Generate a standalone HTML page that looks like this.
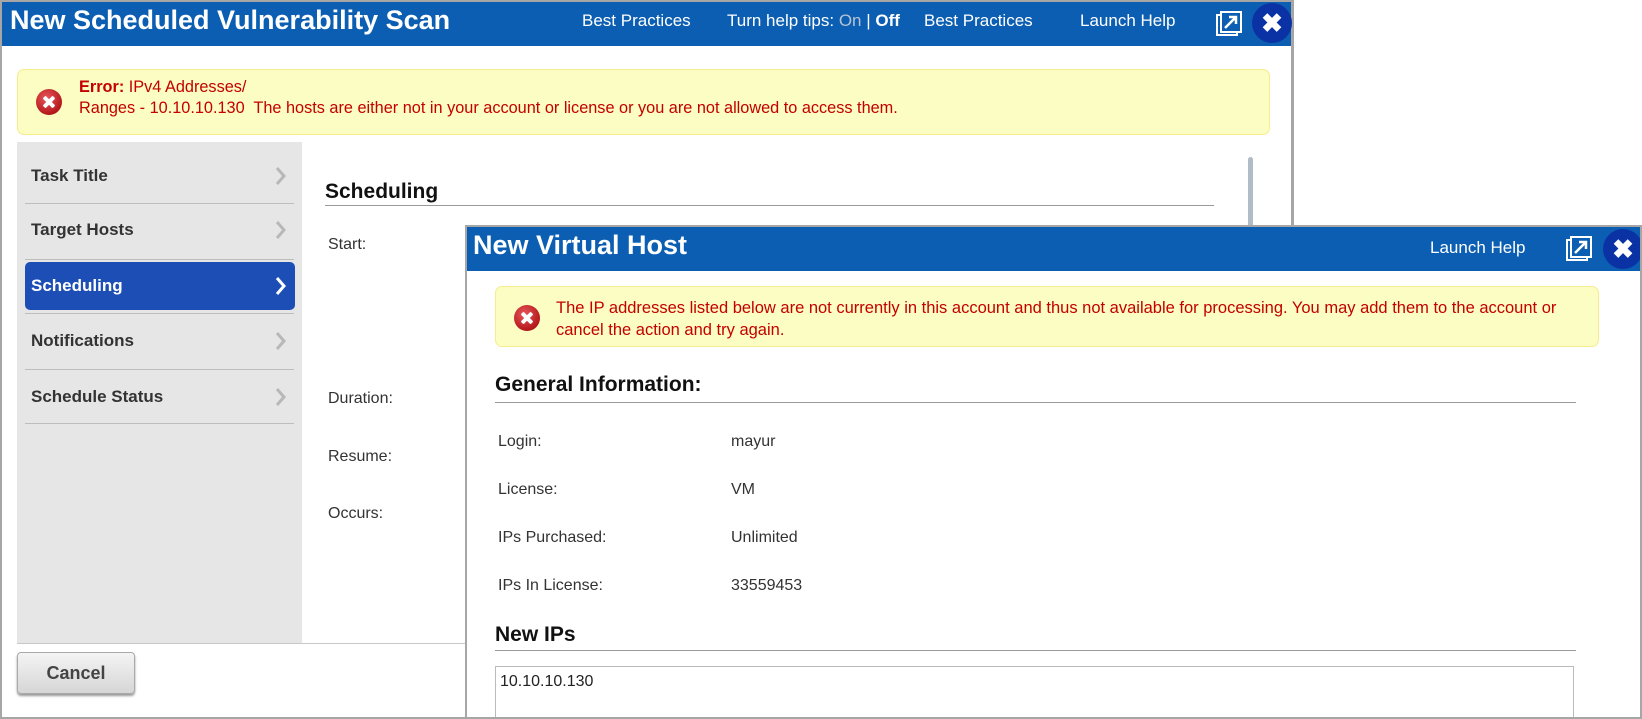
<!DOCTYPE html>
<html><head><meta charset="utf-8"><style>
*{margin:0;padding:0;box-sizing:border-box}
html,body{width:1642px;height:719px;overflow:hidden}
body{background:#fff;font-family:"Liberation Sans",Arial,sans-serif;position:relative}
.a{position:absolute;white-space:nowrap}
.hdr{background:#0b5eb2;color:#fff}
.lnk{font-size:17px;color:#fff}
.err{background:#fbfdc2;border:1px solid #f7ec8f;border-radius:7px}
.ic{width:26px;height:26px;border-radius:50%;background:radial-gradient(circle at 40% 35%,#e8575a,#b4181c 70%,#8e0f12);}
.ic:before,.ic:after{content:"";position:absolute;left:6px;top:11px;width:14px;height:4px;background:#fff;border-radius:1px}
.ic:before{transform:rotate(45deg)}.ic:after{transform:rotate(-45deg)}
.et{font-size:16.3px;color:#c40000}
.nav{font-size:17px;font-weight:bold;color:#333}
.sep{height:1px;background:#bdbdbd;width:269px;left:25px}
.lbl{font-size:16px;color:#333}
.close{width:40px;height:40px;border-radius:50%;background:#0a32a5;color:#fff;font-size:26px;font-weight:bold;text-align:center;line-height:40px}
</style></head><body>
<div class="a" style="left:0;top:0;width:1294px;height:719px;border:2px solid #a6a6a6;border-right-width:3px"></div>
<div class="a hdr" style="left:2px;top:2px;width:1289px;height:44px"></div>
<div class="a" style="left:10px;top:5px;font-size:27px;font-weight:bold;color:#fff">New Scheduled Vulnerability Scan</div>
<div class="a lnk" style="left:582px;top:11px">Best Practices</div>
<div class="a lnk" style="left:727px;top:11px">Turn help tips: <span style="color:#b7c4d4">On</span> | <b>Off</b></div>
<div class="a lnk" style="left:924px;top:11px">Best Practices</div>
<div class="a lnk" style="left:1080px;top:11px">Launch Help</div>
<svg class="a" style="left:1216px;top:11px" width="26" height="26" viewBox="0 0 26 26"><rect x="1" y="4" width="20" height="20" fill="none" stroke="#fff" stroke-width="2"/><rect x="5" y="1" width="20" height="20" fill="#0b5eb2" stroke="#fff" stroke-width="2"/><path d="M9 17 L20 6 M13 6 H20 V13" stroke="#fff" stroke-width="2.5" fill="none"/></svg>
<div class="a close" style="left:1252px;top:3px">✖</div>

<div class="a err" style="left:17px;top:69px;width:1253px;height:66px"></div>
<div class="a ic" style="left:36px;top:89px"></div>
<div class="a et" style="left:79px;top:78px"><b>Error:</b> IPv4 Addresses/</div>
<div class="a et" style="left:79px;top:99px">Ranges - 10.10.10.130&nbsp; The hosts are either not in your account or license or you are not allowed to access them.</div>

<div class="a" style="left:17px;top:142px;width:285px;height:501px;background:#e6e6e6"></div>
<div class="a nav" style="left:31px;top:166px">Task Title</div>
<div class="a sep" style="top:203px"></div>
<div class="a nav" style="left:31px;top:220px">Target Hosts</div>
<div class="a sep" style="top:259px"></div>
<div class="a" style="left:25px;top:262px;width:270px;height:48px;background:#1c4eb6;border-radius:5px"></div>
<div class="a nav" style="left:31px;top:276px;color:#fff">Scheduling</div>
<div class="a sep" style="top:313px"></div>
<div class="a nav" style="left:31px;top:331px">Notifications</div>
<div class="a sep" style="top:369px"></div>
<div class="a nav" style="left:31px;top:387px">Schedule Status</div>
<div class="a sep" style="top:423px"></div>
<svg class="a" style="left:274px;top:165px" width="14" height="260" viewBox="0 0 14 260">
<g fill="none" stroke="#b8b8b8" stroke-width="3"><path d="M3 3 L10 11 L3 19"/><path d="M3 57 L10 65 L3 73"/><path d="M3 168 L10 176 L3 184"/><path d="M3 224 L10 232 L3 240"/></g>
<path d="M3 113 L10 121 L3 129" fill="none" stroke="#fff" stroke-width="3"/></svg>

<div class="a" style="left:325px;top:180px;font-size:21px;font-weight:bold;color:#111">Scheduling</div>
<div class="a" style="left:325px;top:205px;width:889px;height:1px;background:#999"></div>
<div class="a lbl" style="left:328px;top:236px">Start:</div>
<div class="a lbl" style="left:328px;top:390px">Duration:</div>
<div class="a lbl" style="left:328px;top:448px">Resume:</div>
<div class="a lbl" style="left:328px;top:505px">Occurs:</div>
<div class="a" style="left:1248px;top:157px;width:5px;height:72px;background:#b0bcc6;border-radius:3px"></div>

<div class="a" style="left:17px;top:643px;width:1272px;height:1px;background:#c8c8c8"></div>
<div class="a" style="left:17px;top:652px;width:118px;height:42px;border:1px solid #aaa;border-radius:4px;background:linear-gradient(#f4f4f4,#d6d6d6);box-shadow:0 2px 2px #999;font-size:18px;font-weight:bold;color:#444;text-align:center;line-height:40px">Cancel</div>

<div class="a" style="left:465px;top:225px;width:1177px;height:494px;background:#fff;border:2px solid #a6a6a6;border-bottom:none;border-right:none"></div>
<div class="a hdr" style="left:467px;top:227px;width:1175px;height:44px"></div>
<div class="a" style="left:473px;top:230px;font-size:27px;font-weight:bold;color:#fff">New Virtual Host</div>
<div class="a lnk" style="left:1430px;top:238px">Launch Help</div>
<svg class="a" style="left:1566px;top:236px" width="26" height="26" viewBox="0 0 26 26"><rect x="1" y="4" width="20" height="20" fill="none" stroke="#fff" stroke-width="2"/><rect x="5" y="1" width="20" height="20" fill="#0b5eb2" stroke="#fff" stroke-width="2"/><path d="M9 17 L20 6 M13 6 H20 V13" stroke="#fff" stroke-width="2.5" fill="none"/></svg>
<div class="a close" style="left:1603px;top:229px">✖</div>

<div class="a err" style="left:495px;top:286px;width:1104px;height:61px"></div>
<div class="a ic" style="left:514px;top:305px"></div>
<div class="a et" style="left:556px;top:297px;font-size:16.5px;line-height:22px">The IP addresses listed below are not currently in this account and thus not available for processing. You may add them to the account or<br>cancel the action and try again.</div>

<div class="a" style="left:495px;top:373px;font-size:21px;font-weight:bold;color:#111">General Information:</div>
<div class="a" style="left:495px;top:402px;width:1081px;height:1px;background:#999"></div>
<div class="a lbl" style="left:498px;top:433px">Login:</div><div class="a lbl" style="left:731px;top:433px">mayur</div>
<div class="a lbl" style="left:498px;top:481px">License:</div><div class="a lbl" style="left:731px;top:481px">VM</div>
<div class="a lbl" style="left:498px;top:529px">IPs Purchased:</div><div class="a lbl" style="left:731px;top:529px">Unlimited</div>
<div class="a lbl" style="left:498px;top:577px">IPs In License:</div><div class="a lbl" style="left:731px;top:577px">33559453</div>
<div class="a" style="left:495px;top:623px;font-size:21px;font-weight:bold;color:#111">New IPs</div>
<div class="a" style="left:495px;top:650px;width:1081px;height:1px;background:#999"></div>
<div class="a" style="left:495px;top:666px;width:1079px;height:51px;border:1px solid #bbb;border-bottom:none"></div>
<div class="a" style="left:500px;top:673px;font-size:16px;color:#222">10.10.10.130</div>
<div class="a" style="left:0;top:717px;width:1642px;height:2px;background:#a6a6a6"></div>
<div class="a" style="left:1640px;top:225px;width:2px;height:494px;background:#a6a6a6"></div>
</body></html>
